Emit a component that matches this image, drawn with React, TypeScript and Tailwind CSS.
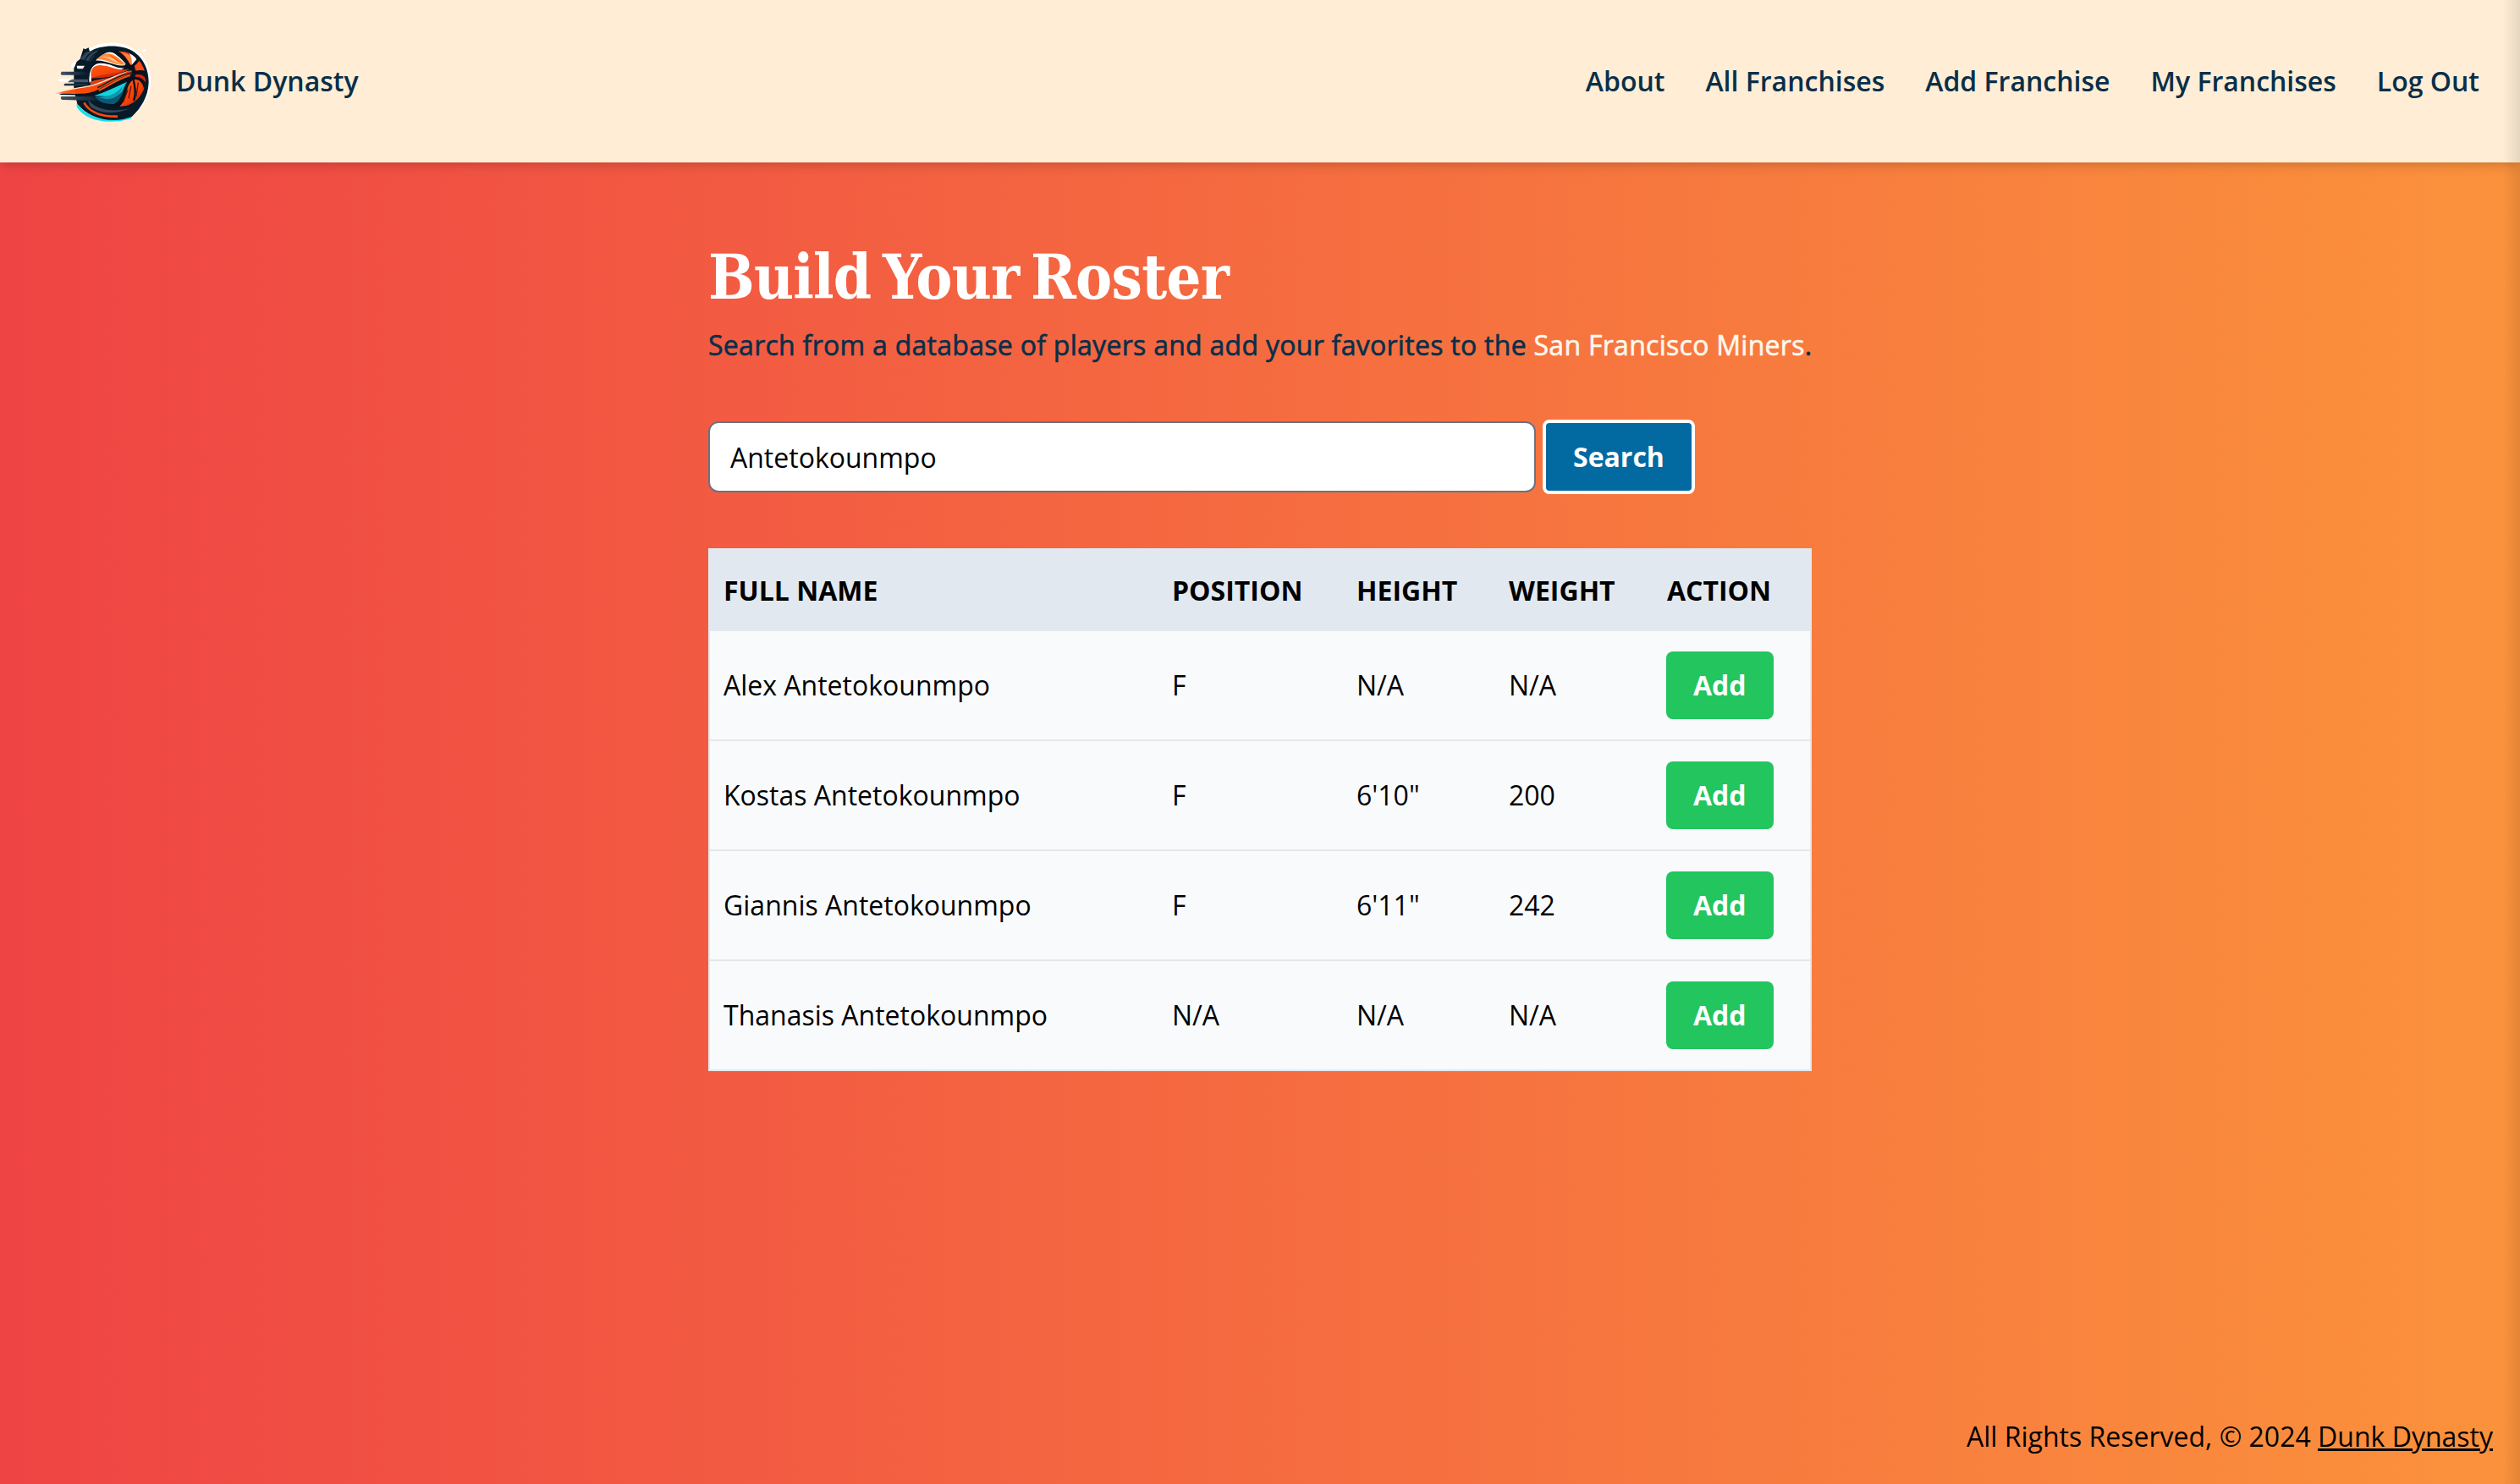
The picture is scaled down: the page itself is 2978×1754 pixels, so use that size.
const players = [
  { name: "Alex Antetokounmpo", position: "F", height: "N/A", weight: "N/A" },
  { name: "Kostas Antetokounmpo", position: "F", height: "6'10\"", weight: "200" },
  { name: "Giannis Antetokounmpo", position: "F", height: "6'11\"", weight: "242" },
  { name: "Thanasis Antetokounmpo", position: "N/A", height: "N/A", weight: "N/A" },
];

const links = ["About", "All Franchises", "Add Franchise", "My Franchises", "Log Out"];

function Logo() {
  return (
    <svg viewBox="0 0 450 390" className="h-[130px] w-[150px]" aria-hidden="true">
      <defs>
        <linearGradient id="panel" x1="0" y1="0" x2="1" y2="1">
          <stop offset="0" stopColor="#ff5a10" />
          <stop offset="0.55" stopColor="#f4440a" />
          <stop offset="1" stopColor="#a81208" />
        </linearGradient>
        <linearGradient id="steel" x1="0" y1="0" x2="1" y2="0">
          <stop offset="0" stopColor="#3d5468" />
          <stop offset="1" stopColor="#0a1c2c" />
        </linearGradient>
        <linearGradient id="flame" x1="0" y1="0" x2="1" y2="0">
          <stop offset="0" stopColor="#ffffff" />
          <stop offset="0.1" stopColor="#ff6a30" />
          <stop offset="0.3" stopColor="#fb4a08" />
          <stop offset="1" stopColor="#e8470f" />
        </linearGradient>
        <clipPath id="sphere"><ellipse cx="266" cy="187" rx="101" ry="101" /></clipPath>
      </defs>
      {/* outline halo */}
      <path d="M160 84C200 55 260 52 305 70C355 92 388 140 384 205C382 245 360 285 322 318L300 300L160 140Z" fill="#fff" />
      <path d="M138 70L150 76L148 84ZM352 85L361 80L369 86L360 91ZM109 290L114 288L116 294L111 296Z" fill="#fff" />
      <path d="M102 150C102 136 106 126 114 122L122 138Z" fill="#fff" />
      {/* helmet shell */}
      <path d="M122 272C150 320 225 342 318 318L314 328C230 352 150 334 122 286Z" fill="#16e0ec" />
      <path d="M146 78L152 82L164 76L168 90C200 70 250 66 290 76C345 90 378 140 377 200C375 250 350 290 318 320C250 348 165 328 124 275L112 225V150L122 126L134 116Z" fill="#061a28" />
      <path d="M134 116L154 92L200 82L170 126Z" fill="#2e4356" />
      <path d="M150 122C158 104 172 92 196 82M166 126C170 112 184 98 206 88" fill="none" stroke="#061a28" strokeWidth="4" />
      <path d="M160 258C185 292 235 308 310 292C265 312 205 312 170 284Z" fill="#334a5e" />
      <path d="M148 271C168 306 206 321 267 320" fill="none" stroke="#fb4a0e" strokeWidth="8" />
      {/* speed bars */}
      <path d="M122 140H150L144 151H124Z" fill="#f5f5f3" />
      <path d="M68 161H160V173H68Q63 167 68 161Z" fill="url(#steel)" />
      <path d="M58 186H112L106 196H58Z" fill="#fff" />
      <path d="M106 188H162V199H90Q96 190 106 188Z" fill="#46596b" />
      <path d="M80 203H160V211H78Q74 207 80 203Z" fill="#1d3243" />
      <path d="M68 249H180L215 264L70 261Q62 256 68 249Z" fill="url(#steel)" />
      {/* ball */}
      <g clipPath="url(#sphere)">
        <rect x="150" y="80" width="230" height="220" fill="#071521" />
        <path d="M166 200C164 160 176 132 204 131C245 130 262 152 290 148L280 154C240 162 225 136 198 140C178 144 172 170 174 196Z" fill="#fff" />
        <path d="M184 122C206 90 242 84 262 101C278 114 290 124 298 137C262 148 229 117 184 122Z" fill="#fff" />
        <path d="M190 118C212 92 242 92 260 106C275 116 286 126 294 136C258 142 229 113 190 118Z" fill="#ff8a3c" />
        <path d="M204 108C236 104 264 118 282 134C256 132 238 108 204 108Z" fill="#ffc08a" />
        <path d="M230 98C252 104 272 120 284 134C264 126 250 108 230 98Z" fill="#ff5b0b" />
        <path d="M262 90C300 84 327 100 334 118L314 140C298 116 284 101 262 90Z" fill="#e03a12" />
        <path d="M276 92C304 96 324 106 328 120L312 136C304 117 292 100 276 92Z" fill="#ff8038" />
        <path d="M308 96C322 102 332 112 334 118L316 138C320 122 316 108 308 96Z" fill="#fff" />
        <path d="M174 184C168 152 182 138 204 139C241 138 262 161 308 152C267 180 216 183 174 184Z" fill="url(#panel)" />
        <path d="M178 182C206 170 251 170 290 158C262 177 220 182 178 184Z" fill="#d9270b" />
        <path d="M170 198C200 186 232 186 262 178C236 194 206 200 170 208Z" fill="#e8400c" />
        <path d="M180 250C216 238 260 216 302 196C286 222 286 258 254 276C220 278 194 266 180 250Z" fill="#0b5873" />
        <path d="M184 246C224 234 258 216 300 198C286 214 288 234 270 242C244 254 216 244 184 246Z" fill="#14d3de" />
        <path d="M200 250C236 252 262 240 284 214C282 234 270 248 248 256C230 260 212 258 200 250Z" fill="#1199aa" />
        <path d="M270 284C300 258 292 214 322 190C350 186 368 200 364 222C350 260 320 286 270 284Z" fill="url(#panel)" />
        <path d="M326 138L345 114C362 132 370 152 366 160L332 162Z" fill="#f94b13" />
        <path d="M330 172C350 169 369 174 367 202C357 184 345 180 330 180Z" fill="#d62409" />
        <path d="M294 136C310 150 332 140 344 112M262 88C290 103 308 130 318 169C328 209 334 239 324 264M322 164C340 156 356 158 376 165M312 184C290 206 306 250 268 286M322 186C347 180 358 198 364 220" fill="none" stroke="#07111d" strokeWidth="7" />
        <path d="M303 226L286 270M315 212L306 256M340 200L333 249" stroke="#5a1410" strokeWidth="4" />
      </g>
      {/* flame trail */}
      <path d="M60 243C96 226 142 218 178 207C227 192 264 167 322 151L326 181C268 189 226 220 184 240C142 248 101 242 60 243Z" fill="#071521" />
      <path d="M40 241C87 219 138 219 179 209C226 195 265 170 316 157L318 168C270 180 231 209 186 230C143 246 87 236 40 241Z" fill="url(#flame)" />
      <path d="M40 241C87 217 138 219 179 207C226 193 265 168 314 156C270 172 226 197 181 211C138 222 99 222 40 241Z" fill="#ffe6cb" />
      <path d="M196 218C230 202 262 176 318 164" fill="none" stroke="#101721" strokeWidth="4" />
      <path d="M200 228C240 210 262 188 312 174" fill="none" stroke="#f2551a" strokeWidth="6" />
    </svg>
  );
}

export default function App() {
  return (
    <div className="relative flex h-[1754px] w-full flex-col overflow-hidden bg-linear-to-r/srgb from-[#ef4444] to-[#fb923c] font-['Open_Sans',sans-serif] text-[32px] leading-[48px] text-black">
      <header className="flex h-48 shrink-0 items-center justify-between bg-[#ffedd5] pr-12 pl-[50px] font-semibold text-[#082f49] shadow-[0_8px_12px_-2px_rgb(0_0_0/0.1),0_4px_8px_-4px_rgb(0_0_0/0.1)]">
        <div className="flex items-center">
          <Logo />
          <span className="pl-2">Dunk Dynasty</span>
        </div>
        <nav className="flex gap-12">
          {links.map((l) => (
            <a key={l} href="#">{l}</a>
          ))}
        </nav>
      </header>

      <main className="mx-auto w-[1304px] flex-1 pt-24">
        <h1 className="h-24 font-['DejaVu_Serif_Condensed','DejaVu_Serif',serif] text-[72px] leading-[80px] font-bold tracking-[-0.8px] whitespace-nowrap text-white [word-spacing:-8px]">
          Build Your Roster
        </h1>
        <p className="font-medium tracking-[0.28px] whitespace-nowrap text-[#082f49] [-webkit-text-stroke:0.6px_currentColor]">
          Search from a database of players and add your favorites to the{" "}
          <span className="text-[#fff7ed] [-webkit-text-stroke:0.6px_#fff7ed]">San Francisco Miners</span>.
        </p>
        <form className="mt-16 flex items-center gap-2">
          <input
            className="h-[84px] w-[978px] rounded-xl border-2 border-[#6b7280] bg-white px-6 text-black"
            defaultValue="Antetokounmpo"
          />
          <button type="button" className="h-[88px] rounded-lg border-4 border-white bg-[#0369a1] px-8 font-bold text-white">
            Search
          </button>
        </form>
        <table className="mt-16 w-[1304px] table-fixed border-separate border-spacing-0 text-left">
          <colgroup>
            <col className="w-[532px]" />
            <col className="w-[218px]" />
            <col className="w-[180px]" />
            <col className="w-[187px]" />
            <col className="w-[187px]" />
          </colgroup>
          <thead className="bg-[#e2e8f0]">
            <tr className="h-[98px]">
              <th className="pt-px pl-[18px] font-bold">FULL NAME</th>
              <th className="pt-px pl-4 font-bold">POSITION</th>
              <th className="pt-px pl-4 font-bold">HEIGHT</th>
              <th className="pt-px pl-4 font-bold">WEIGHT</th>
              <th className="pt-px pl-4 font-bold">ACTION</th>
            </tr>
          </thead>
          <tbody className="bg-[#f8fafc]">
            {players.map((p) => (
              <tr key={p.name} className="h-[130px]">
                <td className="border-b-2 border-l-2 border-gray-200 pl-4">{p.name}</td>
                <td className="border-b-2 border-gray-200 pl-4">{p.position}</td>
                <td className="border-b-2 border-gray-200 pl-4">{p.height}</td>
                <td className="border-b-2 border-gray-200 pl-4">{p.weight}</td>
                <td className="border-r-2 border-b-2 border-gray-200 pl-[15px]">
                  <button type="button" className="block h-20 rounded-lg bg-[#22c55e] px-8 font-bold text-white">Add</button>
                </td>
              </tr>
            ))}
          </tbody>
        </table>
      </main>

      <footer className="p-8 text-right">
        All Rights Reserved, © 2024 <a href="#" className="underline">Dunk Dynasty</a>
      </footer>
      <div className="pointer-events-none absolute inset-y-0 right-0 w-5 bg-linear-to-r from-transparent to-black/10" />
    </div>
  );
}
